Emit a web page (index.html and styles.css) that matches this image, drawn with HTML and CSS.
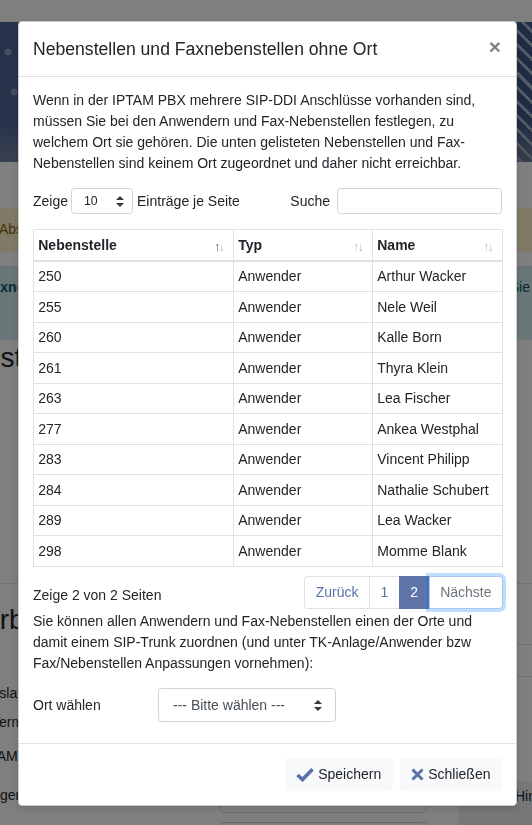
FILE: index.html
```html
<!DOCTYPE html>
<html lang="de">
<head>
<meta charset="utf-8">
<title>Nebenstellen</title>
<link rel="stylesheet" href="styles.css">
</head>
<body>
<div class="page">
  <div class="topbar"></div>
  <div class="banner"></div>
  <div class="alert alert-warn">Absender-Rufnummer prüfen</div>
  <div class="alert alert-info"><b class="info-word">Faxnebenstellen</b><span class="info-end">Sie</span></div>
  <h2 class="page-heading">Nebenstellen</h2>
  <div class="lower-top">
    <h2 class="lower-heading">Arbeitsplätze</h2>
    <div class="rtable"><div class="rrow"></div><div class="rrow"></div></div>
  </div>
  <div class="frm">
    <div class="lbl l1">Translation</div>
    <div class="lbl l2">Terminal</div>
    <div class="lbl l3">IPTAM</div>
    <div class="lbl l4">Anzeigen</div>
    <div class="bg-input i4"></div>
    <div class="bg-btn b4">Hinzufügen</div>
    <div class="bg-input i5"></div>
  </div>
</div>

<div class="backdrop"></div>

<div class="modal">
  <div class="modal-header">
    <h5 class="modal-title">Nebenstellen und Faxnebenstellen ohne Ort</h5>
    <span class="close">×</span>
  </div>
  <div class="modal-body">
    <p class="para">Wenn in der IPTAM PBX mehrere SIP-DDI Anschlüsse vorhanden sind, müssen Sie bei den Anwendern und Fax-Nebenstellen festlegen, zu welchem Ort sie gehören. Die unten gelisteten Nebenstellen und Fax-Nebenstellen sind keinem Ort zugeordnet und daher nicht erreichbar.</p>

    <div class="dt-top">
      <div class="dt-length">Zeige
        <div class="select-sm"><span>10</span>
          <svg class="updown" width="8" height="11" viewBox="0 0 8 11"><path d="M4 0 L8 4 L0 4 Z M0 7 L8 7 L4 11 Z" fill="#343a40"/></svg>
        </div>
        Einträge je Seite</div>
      <div class="dt-filter">Suche <div class="search"></div></div>
    </div>

    <table class="dt">
      <thead>
        <tr>
          <th class="c1 sorted">Nebenstelle</th>
          <th class="c2">Typ</th>
          <th class="c3">Name</th>
        </tr>
      </thead>
      <tbody>
        <tr><td>250</td><td>Anwender</td><td>Arthur Wacker</td></tr>
        <tr><td>255</td><td>Anwender</td><td>Nele Weil</td></tr>
        <tr><td>260</td><td>Anwender</td><td>Kalle Born</td></tr>
        <tr><td>261</td><td>Anwender</td><td>Thyra Klein</td></tr>
        <tr><td>263</td><td>Anwender</td><td>Lea Fischer</td></tr>
        <tr><td>277</td><td>Anwender</td><td>Ankea Westphal</td></tr>
        <tr><td>283</td><td>Anwender</td><td>Vincent Philipp</td></tr>
        <tr><td>284</td><td>Anwender</td><td>Nathalie Schubert</td></tr>
        <tr><td>289</td><td>Anwender</td><td>Lea Wacker</td></tr>
        <tr><td>298</td><td>Anwender</td><td>Momme Blank</td></tr>
      </tbody>
    </table>

    <div class="dt-bottom">
      <div class="dt-info">Zeige 2 von 2 Seiten</div>
      <ul class="pagination">
        <li class="page-link first">Zurück</li>
        <li class="page-link">1</li>
        <li class="page-link active">2</li>
        <li class="page-link last disabled">Nächste</li>
      </ul>
    </div>

    <p class="para">Sie können allen Anwendern und Fax-Nebenstellen einen der Orte und damit einem SIP-Trunk zuordnen (und unter TK-Anlage/Anwender bzw Fax/Nebenstellen Anpassungen vornehmen):</p>

    <div class="form-row">
      <label class="form-label">Ort wählen</label>
      <div class="select"><span>--- Bitte wählen ---</span>
        <svg class="updown" width="8" height="11" viewBox="0 0 8 11"><path d="M4 0 L8 4 L0 4 Z M0 7 L8 7 L4 11 Z" fill="#343a40"/></svg>
      </div>
    </div>
  </div>
  <div class="modal-footer">
    <button class="btn">
      <svg width="18" height="15" viewBox="0 0 18 15"><path d="M1.5 8 L6.5 12.6 L16.5 2.2" fill="none" stroke="#5b72a8" stroke-width="3.6" stroke-linejoin="miter"/></svg>
      <span>Speichern</span>
    </button>
    <button class="btn">
      <svg width="13" height="13" viewBox="0 0 13 13"><path d="M1.5 1.5 L11.5 11.5 M11.5 1.5 L1.5 11.5" fill="none" stroke="#5b72a8" stroke-width="3"/></svg>
      <span>Schließen</span>
    </button>
  </div>
</div>
</body>
</html>
```

FILE: styles.css
```css
* { box-sizing: border-box; }

html, body {
  margin: 0;
  padding: 0;
}

body {
  width: 532px;
  height: 825px;
  overflow: hidden;
  background: #fff;
  color: #212529;
  font-family: "Liberation Sans", Arial, sans-serif;
  font-size: 14px;
  line-height: 1.5;
}

/* ---------- background page ---------- */
.page {
  width: 532px;
  overflow: hidden;
}

.topbar { height: 22px; background: #fff; }

.banner {
  height: 140px;
  background:
    radial-gradient(circle at 8px 30px, rgba(190,205,225,.55) 0 3px, transparent 4px),
    radial-gradient(circle at 14px 70px, rgba(190,205,225,.45) 0 3px, transparent 4px),
    linear-gradient(180deg, transparent 70%, rgba(140,150,165,.6) 100%),
    linear-gradient(90deg, #4b6595 0, #56709e 40%, transparent 40%),
    repeating-linear-gradient(45deg, #3f5888 0 7px, #a6b6d0 7px 10px);
}

.alert { font-size: 14px; }

.alert-warn {
  margin-top: 46px;
  height: 44px;
  padding: 11px 0 0 0;
  background: #fff3cd;
  color: #856404;
  text-indent: -1px;
}

.alert-info {
  margin-top: 14px;
  height: 74px;
  padding: 11px 2px 0 0;
  background: #d1ecf1;
  color: #0c5460;
  display: flex;
  justify-content: space-between;
}

.info-word { margin-left: -16px; }

.page-heading {
  margin: 1px 0 0 -82px;
  font-size: 28px;
  font-weight: 500;
  line-height: 1.2;
  height: 242px;
}

.lower-top {
  height: 94px;
  border-top: 1px solid #dee2e6;
  display: flex;
  justify-content: space-between;
}

.lower-heading {
  margin: 19px 0 0 -19px;
  font-size: 28px;
  font-weight: 500;
  line-height: 1.2;
}

.rtable { width: 15px; padding-top: 60px; }
.rrow { height: 32px; border-top: 1px solid #dee2e6; }

.frm {
  margin-top: 6px;
  display: grid;
  grid-template-columns: 220px 207px 31px 74px;
  grid-template-rows: 29px 34px 33px 42.5px auto;
  align-items: start;
}

.lbl { grid-column: 1; white-space: nowrap; }
.l1 { grid-row: 1; margin-left: -29px; }
.l2 { grid-row: 2; margin-left: -8px; }
.l3 { grid-row: 3; margin-left: -24px; }
.l4 { grid-row: 4; margin-left: -35px; padding-top: 6px; }

.bg-input {
  grid-column: 2;
  height: 34px;
  border: 1px solid #ced4da;
  border-radius: 4px;
  background: #fff;
}
.i4 { grid-row: 4; }
.i5 { grid-row: 5; }

.bg-btn {
  grid-column: 4;
  grid-row: 4 / span 2;
  margin-top: 1.5px;
  height: 50px;
  background: #e9ecef;
  border-radius: 4px;
  padding: 5px 0 0 57px;
  white-space: nowrap;
  overflow: hidden;
}

.backdrop {
  position: fixed;
  inset: 0;
  background: rgba(0, 0, 0, .5);
}

/* ---------- modal ---------- */
.modal {
  position: fixed;
  top: 21px;
  left: 18px;
  width: 499px;
  background: #fff;
  border: 1px solid rgba(0, 0, 0, .2);
  border-radius: 4.2px;
  box-shadow: 0 2px 6px rgba(0, 0, 0, .15);
}

.modal-header {
  display: flex;
  align-items: flex-start;
  justify-content: space-between;
  padding: 14px;
  border-bottom: 1px solid #dee2e6;
}

.modal-title {
  margin: 0;
  font-size: 17.6px;
  font-weight: 500;
  line-height: 1.5;
}

.close {
  font-size: 21px;
  font-weight: 700;
  line-height: 1;
  color: #000;
  opacity: .5;
  padding: 0 1px 0 0;
  margin-top: 0;
}

.modal-body { padding: 13px 14px 14px; }

.para { margin: 0 0 14px; }

.dt-top {
  display: flex;
  justify-content: space-between;
  align-items: center;
  margin-bottom: 15px;
}

.dt-length, .dt-filter {
  display: flex;
  align-items: center;
  white-space: nowrap;
}

.select-sm {
  display: flex;
  align-items: center;
  justify-content: space-between;
  width: 62px;
  height: 26px;
  margin: 0 4px 0 3px;
  padding: 0 8px 0 12px;
  border: 1px solid #ced4da;
  border-radius: 3.5px;
  font-size: 12.25px;
  background: #fff;
}

.search {
  width: 165px;
  height: 26px;
  margin-left: 7px;
  border: 1px solid #ced4da;
  border-radius: 3.5px;
}

.dt {
  width: 469px;
  border-collapse: collapse;
  table-layout: fixed;
  margin-bottom: 7px;
}

.dt th, .dt td {
  border: 1px solid #dee2e6;
  padding: 4.25px;
  text-align: left;
  vertical-align: top;
  white-space: nowrap;
}

.dt th {
  position: relative;
  font-weight: 700;
  border-bottom: 2px solid #dee2e6;
  padding-right: 26px;
}

.dt th::before, .dt th::after {
  position: absolute;
  bottom: 6px;
  width: 6px;
  text-align: center;
  font-size: 12.5px;
  font-weight: 400;
  line-height: 1;
  opacity: .3;
}
.dt th::before { content: "\2191"; right: 13px; }
.dt th::after  { content: "\2193"; right: 8.5px; }
.dt th.sorted::before { opacity: .75; }

.c1 { width: 200px; }
.c2 { width: 139px; }
.c3 { width: 130px; }

.dt-bottom {
  display: flex;
  justify-content: space-between;
  align-items: flex-start;
}

.dt-info { padding-top: 11px; }

.pagination {
  display: flex;
  list-style: none;
  margin: 2px -1px 2px 0;
  padding: 0;
}

.page-link {
  padding: 7px 10.5px;
  line-height: 1.25;
  color: #5b73a8;
  background: #fff;
  border: 1px solid #dee2e6;
  margin-left: -1px;
}

.page-link.first { border-radius: 3.5px 0 0 3.5px; margin-left: 0; }
.page-link.last  { border-radius: 0 3.5px 3.5px 0; }

.page-link.active {
  background: #5f74a8;
  border-color: #5f74a8;
  color: #fff;
}

.page-link.disabled {
  color: #6c757d;
  position: relative;
  box-shadow: 0 0 0 3px rgba(0, 123, 255, .25);
  border-color: #aac8f0;
}

.form-row {
  display: flex;
  align-items: center;
  margin-bottom: 7px;
}

.form-label { width: 125px; }

.select {
  display: flex;
  align-items: center;
  justify-content: space-between;
  width: 178px;
  height: 33.5px;
  padding: 0 13px 0 14px;
  border: 1px solid #ced4da;
  border-radius: 3.5px;
  color: #495057;
}

.modal-footer {
  display: flex;
  justify-content: flex-end;
  padding: 10.5px;
  border-top: 1px solid #dee2e6;
}

.btn {
  display: flex;
  align-items: center;
  gap: 4px;
  margin: 3.5px;
  padding: 5.25px 10.5px;
  font-family: inherit;
  font-size: 14px;
  line-height: 1.5;
  color: #212529;
  background: #f8f9fa;
  border: 1px solid #f8f9fa;
  border-radius: 3.5px;
}
```
